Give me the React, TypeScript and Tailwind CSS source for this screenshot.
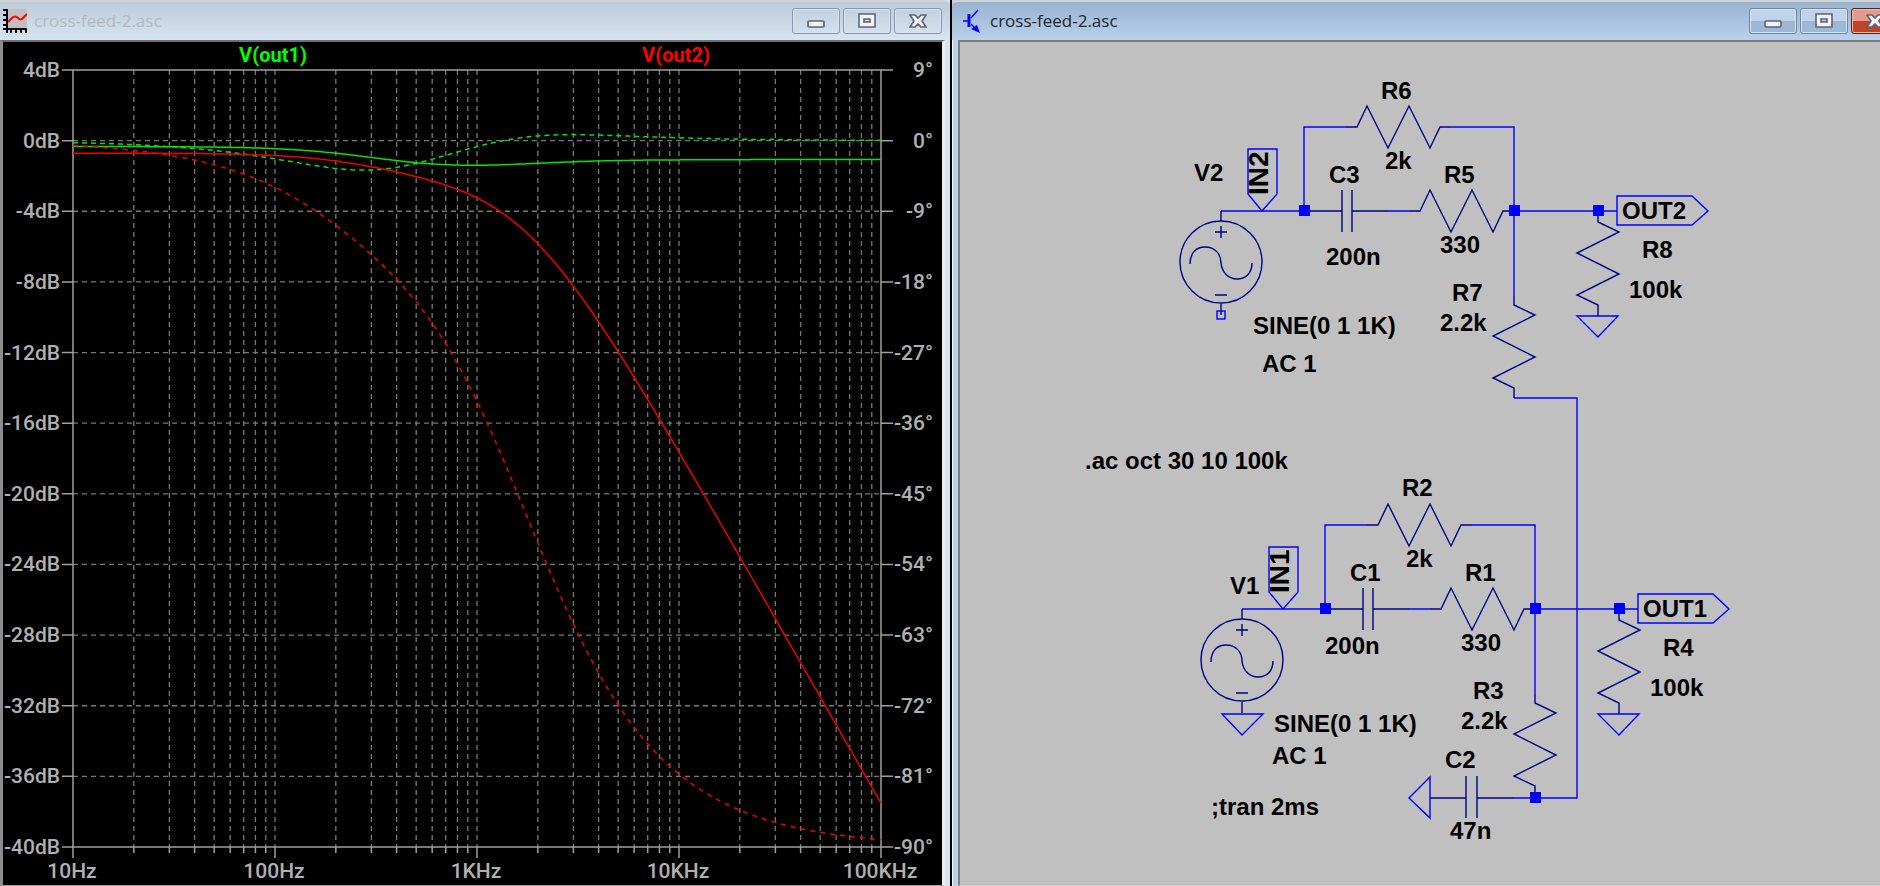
import type { ReactNode } from "react";

const WIRE = "#0000ff";
const PART = "#000084";

/* ---------- AC analysis of the cross-feed network ---------- */

type Complex = [number, number];

const add = (a: Complex, b: Complex): Complex => [a[0] + b[0], a[1] + b[1]];
const mul = (a: Complex, b: Complex): Complex => [
  a[0] * b[0] - a[1] * b[1],
  a[0] * b[1] + a[1] * b[0],
];
const inv = (a: Complex): Complex => {
  const m = a[0] * a[0] + a[1] * a[1];
  return [a[0] / m, -a[1] / m];
};
const par = (a: Complex, b: Complex) => inv(add(inv(a), inv(b)));

function solve(f: number) {
  const w = 2 * Math.PI * f;
  const c1: Complex = [0, -1 / (w * 200e-9)];
  const c2: Complex = [0, -1 / (w * 47e-9)];
  const source = par([2000, 0], add([330, 0], c1));
  const tail = par(c2, [102200, 0]);
  const branch = add([2200, 0], tail);
  const load = par([100000, 0], branch);
  const out1 = mul(load, inv(add(load, source)));
  const mid = mul(out1, mul(tail, inv(branch)));
  const out2: Complex = [mid[0] / 1.022, mid[1] / 1.022];
  return { out1, out2 };
}

const db = (v: Complex) => 20 * Math.log10(Math.hypot(v[0], v[1]));
const deg = (v: Complex) => (Math.atan2(v[1], v[0]) * 180) / Math.PI;

/* ---------- Plot ---------- */

const LEFT = 73;
const RIGHT = 881;
const TOP = 70;
const BOTTOM = 847;

const xOf = (f: number) => LEFT + ((RIGHT - LEFT) * (Math.log10(f) - 1)) / 4;
const yOf = (gain: number) => TOP + ((BOTTOM - TOP) * (4 - gain)) / 44;

const samples = Array.from({ length: 401 }, (_, i) => 10 ** (1 + i / 100));

function trace(value: (f: number) => number) {
  return samples
    .map((f) => `${xOf(f).toFixed(1)},${yOf(value(f)).toFixed(1)}`)
    .join(" ");
}

const traces = [
  { color: "#00e800", dash: undefined, points: trace((f) => db(solve(f).out1)) },
  { color: "#00e800", dash: "5 4", points: trace((f) => (deg(solve(f).out1) * 4) / 9) },
  { color: "#f00000", dash: undefined, points: trace((f) => db(solve(f).out2)) },
  { color: "#f00000", dash: "5 5", points: trace((f) => (deg(solve(f).out2) * 4) / 9) },
];

const rows = Array.from({ length: 12 }, (_, i) => ({
  gain: 4 - 4 * i,
  phase: 9 - 9 * i,
}));

const columns = [10, 100, 1000, 10000].flatMap((decade) =>
  [2, 3, 4, 5, 6, 7, 8, 9, 10].map((n) => ({ f: decade * n, major: n === 10 })),
);

const freqLabels = [
  { f: 10, text: "10Hz" },
  { f: 100, text: "100Hz" },
  { f: 1000, text: "1KHz" },
  { f: 10000, text: "10KHz" },
  { f: 100000, text: "100KHz" },
];

function Plot() {
  return (
    <svg
      viewBox="3 42 939 843"
      preserveAspectRatio="xMinYMin meet"
      className="block h-full w-full font-['Roboto',sans-serif] text-[21px] font-medium"
      role="img"
      aria-label="Frequency response"
    >
      <g stroke="#787878" strokeWidth="1.3" strokeDasharray="5 4">
        {rows.slice(1, -1).map(({ gain }) => (
          <line key={gain} x1={LEFT} x2={RIGHT} y1={yOf(gain)} y2={yOf(gain)} />
        ))}
        {columns.slice(0, -1).map(({ f }) => (
          <line key={f} x1={xOf(f)} x2={xOf(f)} y1={TOP} y2={BOTTOM} />
        ))}
      </g>

      <g stroke="#a0a0a0" strokeWidth="1.5" fill="none">
        <rect x={LEFT} y={TOP} width={RIGHT - LEFT} height={BOTTOM - TOP} />
        {rows.map(({ gain }) => (
          <path key={gain} d={`M62 ${yOf(gain)}H73M881 ${yOf(gain)}h12`} />
        ))}
        <path d={`M${LEFT} ${BOTTOM}v11`} />
        {columns.map(({ f, major }) => (
          <path key={f} d={`M${xOf(f)} ${BOTTOM}v${major ? 11 : 6}`} />
        ))}
      </g>

      <g fill="none" strokeWidth="1.5">
        {traces.map(({ color, dash, points }) => (
          <polyline key={points} points={points} stroke={color} strokeDasharray={dash} />
        ))}
      </g>

      <g fill="#b0b0b0">
        {rows.map(({ gain, phase }) => (
          <g key={gain}>
            <text x="60" y={yOf(gain) + 7} textAnchor="end">
              {gain}dB
            </text>
            <text x="933" y={yOf(gain) + 7} textAnchor="end">
              {phase}°
            </text>
          </g>
        ))}
        {freqLabels.map(({ f, text }) => (
          <text key={f} x={xOf(f) - 1} y="878" textAnchor="middle">
            {text}
          </text>
        ))}
      </g>

      <g textAnchor="middle" className="text-[20px] font-bold">
        <text x="273" y="62" fill="#00ff00">V(out1)</text>
        <text x="676" y="62" fill="#ff0000">V(out2)</text>
      </g>
    </svg>
  );
}

/* ---------- Schematic ---------- */

const horizontalZigzag = "l10 -21l21 42l21 -42l21 42l10 -21";
const verticalZigzag = "l21 10l-42 21l42 21l-42 21l21 10";

function Node({ x, y }: { x: number; y: number }) {
  return <rect x={x - 5} y={y - 6} width="11" height="11" fill={WIRE} stroke="none" />;
}

// One channel: source, RC shelf, load resistor and the net flags
function Channel({ n, x, y }: { n: number; x: number; y: number }) {
  return (
    <g transform={`translate(${x} ${y})`}>
      <g stroke={WIRE}>
        <path d="M1221 211H1304V127H1346M1451 127H1514V296M1388 211H1409M1514 211H1617" />
        <path d="M1262 211L1248 194V149H1277V194Z" />
        <path d="M1617 196H1692L1708 211L1692 225H1617Z" />
        <path d="M1577 316H1618L1598 337Z" />
      </g>
      <g stroke={PART}>
        <path d="M1221 211V221M1221 304V315" />
        <circle cx="1221" cy="262" r="41" />
        <path d="M1215 232H1227M1221 226V238M1215 295H1227" />
        <path d="M1190 264C1190 252 1197 247 1205 247C1215 247 1221 254 1221 263C1222 273 1229 279 1237 279C1246 279 1252 273 1252 263" />
        <path d="M1304 211H1342M1342 190V232M1352 190V232M1352 211H1388" />
        <path d={`M1346 127H1357${horizontalZigzag}H1451`} />
        <path d={`M1409 211H1420${horizontalZigzag}H1514`} />
        <path d={`M1514 296V305${verticalZigzag}v10`} />
        <path d={`M1598 211V222${verticalZigzag}v11`} />
      </g>
      <Node x={1304} y={211} />
      <Node x={1514} y={211} />
      <Node x={1598} y={211} />
      <g fill="#000" stroke="none">
        <text x="1622" y="219">OUT{n}</text>
        <text transform="translate(1268 195) rotate(-90)" className="text-[28px]">
          IN{n}
        </text>
      </g>
    </g>
  );
}

const labels = [
  { x: 1381, y: 99, text: "R6" },
  { x: 1385, y: 169, text: "2k" },
  { x: 1329, y: 183, text: "C3" },
  { x: 1194, y: 181, text: "V2" },
  { x: 1326, y: 265, text: "200n" },
  { x: 1444, y: 183, text: "R5" },
  { x: 1440, y: 253, text: "330" },
  { x: 1642, y: 258, text: "R8" },
  { x: 1629, y: 298, text: "100k" },
  { x: 1452, y: 301, text: "R7" },
  { x: 1440, y: 331, text: "2.2k" },
  { x: 1253, y: 334, text: "SINE(0 1 1K)" },
  { x: 1262, y: 372, text: "AC 1" },
  { x: 1085, y: 469, text: ".ac oct 30 10 100k" },
  { x: 1402, y: 496, text: "R2" },
  { x: 1406, y: 567, text: "2k" },
  { x: 1350, y: 581, text: "C1" },
  { x: 1230, y: 594, text: "V1" },
  { x: 1325, y: 654, text: "200n" },
  { x: 1465, y: 581, text: "R1" },
  { x: 1461, y: 651, text: "330" },
  { x: 1663, y: 656, text: "R4" },
  { x: 1650, y: 696, text: "100k" },
  { x: 1473, y: 699, text: "R3" },
  { x: 1461, y: 729, text: "2.2k" },
  { x: 1274, y: 732, text: "SINE(0 1 1K)" },
  { x: 1272, y: 764, text: "AC 1" },
  { x: 1211, y: 815, text: ";tran 2ms" },
  { x: 1445, y: 768, text: "C2" },
  { x: 1450, y: 839, text: "47n" },
];

function Schematic() {
  return (
    <svg
      viewBox="960 42 920 843"
      preserveAspectRatio="xMinYMin meet"
      className="block h-full w-full font-['Liberation_Sans',Arial,sans-serif] text-[24px] font-bold"
      role="img"
      aria-label="Cross-feed schematic"
    >
      <g fill="none" strokeWidth="1.4">
        <Channel n={2} x={0} y={0} />
        <Channel n={1} x={21} y={398} />

        <g stroke={WIRE}>
          <rect x="1217" y="311" width="8" height="8" />
          <path d="M1514 398H1577V798H1514" />
          <path d="M1222 714H1263L1242 735Z" />
          <path d="M1430 777V818L1409 798Z" />
        </g>
        <path
          stroke={PART}
          d="M1430 798H1466M1466 776V818M1477 776V818M1477 798H1514"
        />
        <Node x={1535} y={798} />
      </g>
      {labels.map(({ x, y, text }) => (
        <text key={`${x}-${y}`} x={x} y={y}>
          {text}
        </text>
      ))}
    </svg>
  );
}

/* ---------- Window chrome ---------- */

function PlotIcon() {
  return (
    <svg width="24" height="24" viewBox="0 0 24 24" fill="none" aria-hidden="true">
      <path d="M4 0H24V20H4Z" fill="#c0c0c0" />
      <path d="M4 0V24M0 20H24" stroke="#000" strokeWidth="2" />
      <path
        d="M0 1H4M0 6H4M0 11H4M0 16H4M8 20V24M13 20V24M18 20V24M23 20V24"
        stroke="#000"
        strokeWidth="2"
      />
      <path d="M5 13L9 9Q12 6 15 9Q18 12 20 9L24 5" stroke="#ff0000" strokeWidth="2" />
    </svg>
  );
}

function TransistorIcon() {
  return (
    <svg width="20" height="24" viewBox="0 0 20 24" fill="none" aria-hidden="true">
      <path d="M0 12H6M8 9L15 1M8 15L14 21" stroke="#0000ff" strokeWidth="1.5" />
      <path d="M6 5V18" stroke="#0000ff" strokeWidth="3" />
      <path d="M17 24L8 20L14 16Z" fill="#0000ff" />
    </svg>
  );
}

const glyph = { fill: "#f4f4f4", stroke: "#5a6378", strokeWidth: 1.6 };

function CaptionButtons({ active }: { active: boolean }) {
  const base = "flex h-[26px] w-12 shrink-0 items-center justify-center rounded-[3px] border";
  const plain = active
    ? "border-[#6d84a3] bg-linear-to-b from-[#c0d3e8] from-50% to-[#9db8d6] to-50% shadow-[inset_0_0_0_1px_#d5e3f2]"
    : "border-[#8795b5] bg-linear-to-b from-[#c2d0df] to-[#d3e1ef] shadow-[inset_0_0_0_1px_#d8e4f0]";
  const close = active
    ? "border-[#5e1f1a] bg-linear-to-b from-[#e09b8e] from-50% to-[#c0432b] to-50% shadow-[inset_0_0_0_1px_#efb9ae]"
    : plain;
  return (
    <div className="flex gap-[3px]">
      <button type="button" aria-label="Minimize" className={`${base} ${plain}`}>
        <svg width="18" height="18" viewBox="0 0 18 18" {...glyph}>
          <rect x="1" y="9" width="16" height="6" rx="1" />
        </svg>
      </button>
      <button type="button" aria-label="Maximize" className={`${base} ${plain}`}>
        <svg width="18" height="18" viewBox="0 0 18 18" {...glyph}>
          <path fillRule="evenodd" d="M1 2H17V15H1ZM6 7V10H12V7Z" />
        </svg>
      </button>
      <button type="button" aria-label="Close" className={`${base} ${close}`}>
        <svg width="18" height="18" viewBox="0 0 18 18" {...glyph}>
          <path d="M1 3H6L9 6L12 3H17L13 9L17 15H12L9 12L6 15H1L5 9Z" />
        </svg>
      </button>
    </div>
  );
}

function TitleBar({
  icon,
  active,
  className,
}: {
  icon: ReactNode;
  active: boolean;
  className: string;
}) {
  return (
    <header
      className={`flex h-10 shrink-0 items-center justify-between overflow-hidden border-t-2 border-[#cfd3d8] pb-px ${className}`}
    >
      <div className="flex items-center gap-[7px]">
        {icon}
        <h1
          className={`font-['Open_Sans',sans-serif] text-[17px] leading-6 ${
            active ? "text-[#1c2430]" : "text-[#b4babf]"
          }`}
        >
          cross-feed-2.asc
        </h1>
      </div>
      <CaptionButtons active={active} />
    </header>
  );
}

export default function App() {
  return (
    <main className="grid h-screen grid-cols-[950fr_930fr] overflow-hidden bg-black">
      <section className="flex min-h-0 min-w-0 flex-col bg-[#d7e4f2]">
        <TitleBar
          active={false}
          icon={<PlotIcon />}
          className="rounded-tr-md bg-linear-to-b from-[#bccad9] to-[#d7e4f2] pr-2 pl-[3px]"
        />
        <div className="mr-[5px] min-h-0 flex-1 border-t-2 border-r-[3px] border-b border-l-[3px] border-t-[#6e6e6e] border-r-[#eeeeee] border-b-[#a0a0a0] border-l-[#8c8c8c] bg-black">
          <Plot />
        </div>
      </section>

      <section className="flex min-h-0 min-w-0 flex-col border-l-2 border-black bg-[#b9d1ea]">
        <TitleBar
          active
          icon={<TransistorIcon />}
          className="-mr-[19px] rounded-tl-md bg-linear-to-b from-[#98b2d0] to-[#b9d1ea] pl-[11px]"
        />
        <div className="min-h-0 flex-1 border-l border-[#f4f8fc]">
          <div className="ml-[5px] h-full border-t-2 border-b border-l-2 border-t-[#7c7c7c] border-b-[#d0d0d0] border-l-[#808080] bg-[#c0c0c0]">
            <Schematic />
          </div>
        </div>
      </section>
    </main>
  );
}
